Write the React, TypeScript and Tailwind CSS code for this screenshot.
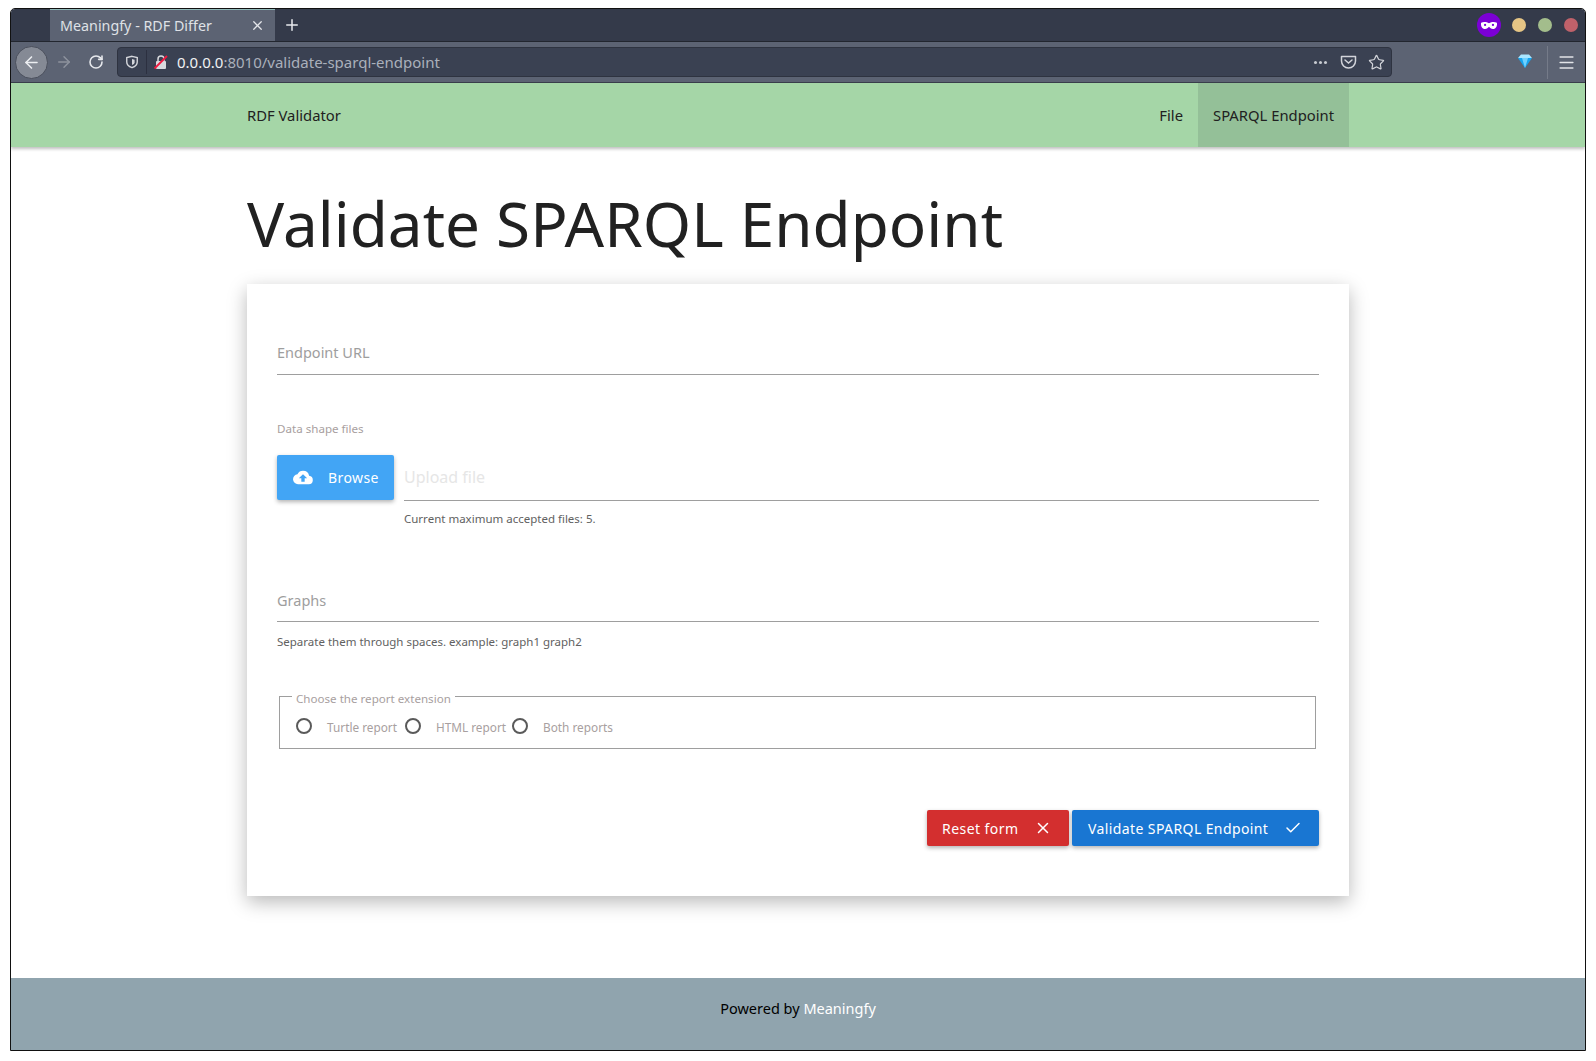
import React from "react";
import { ArrowLeft, ArrowRight, RotateCw, Plus, X, Check, Menu, Star } from "lucide-react";

function Radio({ label, extra }: { label: string; extra?: string }) {
  return (
    <div className={`flex items-center gap-[15px] ${extra ?? ""}`}>
      <span className="w-[16px] h-[16px] rounded-full border-2 border-[#5a5a5a] shrink-0 -translate-y-[1px]" />
      <span className="text-[11.8px] text-[#a8a0a0] translate-y-[1px]">{label}</span>
    </div>
  );
}

export default function App() {
  return (
    <div className="w-[1596px] h-[1061px] bg-white pl-[10px] pr-[10px] pt-[8px] pb-[10px] overflow-hidden font-['Noto_Sans',sans-serif]">
      <div className="h-[1043px] border border-[#111] rounded-t-[5px] flex flex-col overflow-hidden">
        {/* tab strip */}
        <div className="h-[33px] bg-[#343a4a] flex items-stretch border-b border-[#22262f] shrink-0">
          <div className="w-[39px]" />
          <div className="w-[225px] bg-[#5c6373] border-t border-[#8fb8b8] flex items-center pl-[10px] pr-[10px] justify-between">
            <span className="text-[14.3px] text-[#dfe1e6]">Meaningfy - RDF Differ</span>
            <X size={15} className="text-[#e4e6ea]" />
          </div>
          <div className="w-[34px] flex items-center justify-center">
            <Plus size={18} className="text-[#e8eaee]" />
          </div>
          <div className="flex-1" />
          <div className="flex items-center gap-[12px] pr-[7px]">
            <span className="w-[24px] h-[24px] rounded-full bg-[#7b00d6] flex items-center justify-center mr-[-1px]">
              <svg width="18" height="9" viewBox="0 0 16 8">
                <path d="M1 1.500C3 .5 6 .7 8 2c2-1.300 5-1.500 7-.5.500 2.500-.5 5-3 5.500-2 .2-3-1-4-2-1 1-2 2.200-4 2C1.500 6.500.5 4 1 1.500Z" fill="#fff" />
                <circle cx="4.500" cy="3.500" r="1" fill="#7b00d6" />
                <circle cx="11.500" cy="3.500" r="1" fill="#7b00d6" />
              </svg>
            </span>
            <span className="w-[14px] h-[14px] rounded-full bg-[#e6c585]" />
            <span className="w-[14px] h-[14px] rounded-full bg-[#a3bd8c]" />
            <span className="w-[14px] h-[14px] rounded-full bg-[#bf616a]" />
          </div>
        </div>
        {/* toolbar */}
        <div className="h-[41px] bg-[#5c6373] flex items-center shrink-0 border-b border-[#3a3f4c]">
          <div className="w-[33px] h-[33px] ml-[4px] rounded-full bg-[#858a95] border border-[#4a4f5c] flex items-center justify-center">
            <ArrowLeft size={19} className="text-[#eceef1]" />
          </div>
          <div className="w-[32px] flex justify-center">
            <ArrowRight size={18} className="text-[#8d929d]" />
          </div>
          <div className="w-[32px] flex justify-center">
            <RotateCw size={16} strokeWidth={2.4} className="text-[#e6e8ec]" />
          </div>
          <div className="w-[1275px] h-[30px] ml-[5px] rounded-[4px] bg-[#3a4152] border border-[#2e3340] flex items-center">
            <svg width="14" height="14" viewBox="0 0 16 16" className="ml-[7px]" fill="none" stroke="#d4d6db" strokeWidth="1.600">
              <path d="M8 1.500 14 3v5c0 3-3 5.500-6 6.500C5 13.500 2 11 2 8V3z" />
              <path d="M8 4.500 11 5.300v3c0 1.500-1.500 2.600-3 3.200z" fill="#d4d6db" stroke="none" />
            </svg>
            <span className="w-px h-[24px] bg-[#2c3040] ml-[7px]" />
            <svg width="16" height="16" viewBox="0 0 16 16" className="ml-[6px]">
              <rect x="3" y="7" width="10" height="8" rx="1" fill="#d8dade" />
              <path d="M5 7V5a3 3 0 0 1 6 0v2" stroke="#d8dade" strokeWidth="1.500" fill="none" />
              <path d="M1.500 14.500 14 2" stroke="#f0193f" strokeWidth="1.800" />
            </svg>
            <span className="ml-[8px] text-[15px] text-[#f0f1f3]">
              0.0.0.0<span className="text-[#aab0bb]">:8010/validate-sparql-endpoint</span>
            </span>
            <div className="ml-auto flex items-center pr-[6px] text-[#d2d4da]">
              <div className="flex gap-[2px] mr-[13px]">
                <span className="w-[3px] h-[3px] rounded-full bg-[#c8cbd2]" />
                <span className="w-[3px] h-[3px] rounded-full bg-[#c8cbd2]" />
                <span className="w-[3px] h-[3px] rounded-full bg-[#c8cbd2]" />
              </div>
              <svg width="17" height="16" viewBox="0 0 17 16" fill="none" stroke="#d2d4da" strokeWidth="1.500" className="mr-[11px]">
                <path d="M1.500 2.500h14V7a7 7 0 0 1-14 0z" strokeLinejoin="round" />
                <path d="m5 6 3.500 3L12 6" strokeLinecap="round" />
              </svg>
              <Star size={17} strokeWidth={1.7} />
            </div>
          </div>
          <div className="flex-1 flex items-center justify-end">
            <svg width="14" height="15" viewBox="0 0 14 15" className="mr-[15px] -translate-y-[1px]">
              <path d="M0 4 3 .5h8L14 4z" fill="#a9e6ff" />
              <path d="M0 4h14L7 14z" fill="#17a4ee" />
              <path d="M4 4h6L7 14z" fill="#6fd1ff" />
            </svg>
            <span className="w-px h-[33px] bg-[#757b89]" />
            <Menu size={19} className="text-[#e2e4e8] ml-[9px] mr-[9px]" />
          </div>
        </div>
        {/* page */}
        <div className="flex-1 bg-white flex flex-col min-h-0">
          <nav className="h-[64px] bg-[#a5d6a7] shrink-0 shadow-[0_2px_3px_rgba(0,0,0,0.25)] relative">
            <div className="w-[1102px] mx-auto h-full flex items-center justify-between text-[14.8px] text-[#212121]">
              <span>RDF Validator</span>
              <div className="flex h-full items-stretch">
                <span className="px-[15px] flex items-center">File</span>
                <span className="px-[15px] flex items-center bg-[#94c098]">SPARQL Endpoint</span>
              </div>
            </div>
          </nav>
          <main className="w-[1102px] mx-auto flex-1">
            <h1 className="text-[62px] leading-[76px] text-[#212121] mt-[38px] pb-[1px] whitespace-nowrap">Validate SPARQL Endpoint</h1>
            <div className="mt-[22px] h-[612px] bg-white shadow-[0_6px_18px_rgba(0,0,0,0.28)] px-[30px] pt-[56px]">
              <div className="h-[35px] border-b border-[#9e9e9e] text-[14.5px] text-[#9e9e9e] leading-[24px]">Endpoint URL</div>
              <div className="mt-[46px] text-[11.6px] leading-[16px] text-[#a8a0a0]">Data shape files</div>
              <div className="mt-[18px] flex gap-[10px]">
                <div className="w-[117px] h-[45px] bg-[#42a5f5] rounded-[2px] shadow-[0_2px_4px_rgba(0,0,0,0.3)] flex items-center text-white text-[14px] tracking-[0.4px] pl-[16px] gap-[15px]">
                  <svg width="20" height="15" viewBox="0 0 24 18" fill="#fff">
                    <path d="M19.350 7.040A7.490 7.490 0 0 0 12 1a7.500 7.500 0 0 0-6.650 4.040A6 6 0 0 0 6 17h13a5 5 0 0 0 .350-9.960ZM14 10v4h-4v-4H7l5-5 5 5h-3Z" />
                  </svg>
                  <span>Browse</span>
                </div>
                <div className="flex-1 h-[46px] border-b border-[#9e9e9e] text-[16px] text-[#e6e6e6] leading-[44px]">Upload file</div>
              </div>
              <div className="ml-[127px] mt-[10px] text-[11.5px] leading-[16px] text-[#616161]">Current maximum accepted files: 5.</div>
              <div className="mt-[60px] h-[35px] border-b border-[#9e9e9e] text-[14.5px] text-[#9e9e9e] leading-[26px]">Graphs</div>
              <div className="mt-[12px] text-[11.5px] leading-[16px] text-[#616161]">Separate them through spaces. example: graph1 graph2</div>
              <fieldset className="ml-[2px] mr-[3px] mt-[40px] h-[59px] border border-[#9e9e9e] pl-[16px] pr-[16px] flex">
                <legend className="ml-[-4px] px-[4px] text-[11.6px] text-[#a8a0a0] leading-[12px] translate-y-[3px]">Choose the report extension</legend>
                <div className="flex items-center gap-[6px] pt-[4px]">
                  <Radio label="Turtle report" extra="mr-[2px]" />
                  <Radio label="HTML report" />
                  <Radio label="Both reports" />
                </div>
              </fieldset>
              <div className="mt-[61px] flex justify-end gap-[3px]">
                <div className="w-[142px] h-[36px] bg-[#d32f2f] rounded-[2px] shadow-[0_2px_4px_rgba(0,0,0,0.3)] flex items-center justify-between pl-[15px] pr-[17px] text-white text-[14px] tracking-[0.45px]">
                  <span>Reset form</span>
                  <X size={18} />
                </div>
                <div className="w-[247px] h-[36px] bg-[#1976d2] rounded-[2px] shadow-[0_2px_4px_rgba(0,0,0,0.3)] flex items-center justify-between pl-[16px] pr-[17px] text-white text-[14px] tracking-[0.4px]">
                  <span>Validate SPARQL Endpoint</span>
                  <Check size={18} />
                </div>
              </div>
            </div>
          </main>
          <footer className="h-[72px] bg-[#90a4ae] shrink-0 text-center pt-[20px] text-[14.5px] leading-[20px] text-black">
            Powered by <span className="text-white">Meaningfy</span>
          </footer>
        </div>
      </div>
    </div>
  );
}
